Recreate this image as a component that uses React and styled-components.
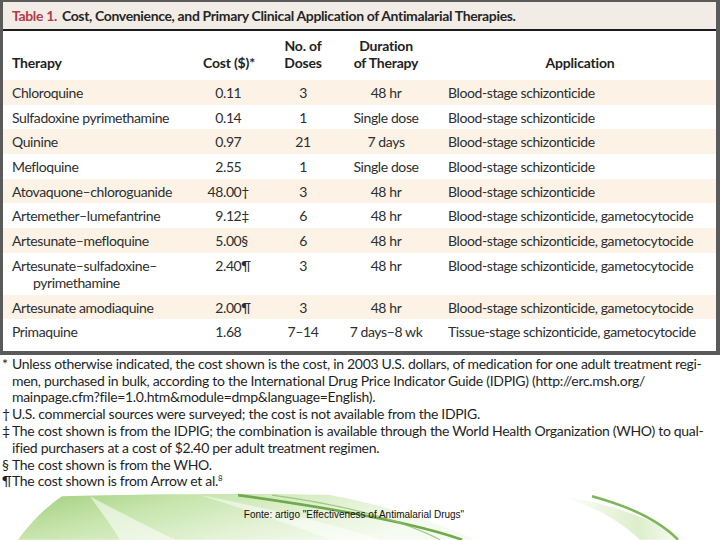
import styled, { createGlobalStyle } from "styled-components";

const GlobalStyle = createGlobalStyle`
  html, body {
    margin: 0;
    padding: 0;
    background: #fff;
  }
  body {
    font-family: Lato, "Open Sans", sans-serif;
    width: 720px;
    height: 540px;
    overflow: hidden;
  }
`;

const rows = [
    { therapy: ["Chloroquine"], cost: ["0", ".11", ""], doses: "3", duration: "48 hr", application: "Blood-stage schizonticide" },
    { therapy: ["Sulfadoxine pyrimethamine"], cost: ["0", ".14", ""], doses: "1", duration: "Single dose", application: "Blood-stage schizonticide" },
    { therapy: ["Quinine"], cost: ["0", ".97", ""], doses: "21", duration: "7 days", application: "Blood-stage schizonticide" },
    { therapy: ["Mefloquine"], cost: ["2", ".55", ""], doses: "1", duration: "Single dose", application: "Blood-stage schizonticide" },
    { therapy: ["Atovaquone–chloroguanide"], cost: ["48", ".00", "†"], doses: "3", duration: "48 hr", application: "Blood-stage schizonticide" },
    { therapy: ["Artemether–lumefantrine"], cost: ["9", ".12", "‡"], doses: "6", duration: "48 hr", application: "Blood-stage schizonticide, gametocytocide" },
    { therapy: ["Artesunate–mefloquine"], cost: ["5", ".00", "§"], doses: "6", duration: "48 hr", application: "Blood-stage schizonticide, gametocytocide" },
    { therapy: ["Artesunate–sulfadoxine–", "pyrimethamine"], cost: ["2", ".40", "¶"], doses: "3", duration: "48 hr", application: "Blood-stage schizonticide, gametocytocide" },
    { therapy: ["Artesunate amodiaquine"], cost: ["2", ".00", "¶"], doses: "3", duration: "48 hr", application: "Blood-stage schizonticide, gametocytocide" },
    { therapy: ["Primaquine"], cost: ["1", ".68", ""], doses: "7–14", duration: "7 days–8 wk", application: "Tissue-stage schizonticide, gametocytocide" },
];

const notes = [
    { mark: "*", lines: [
        "Unless otherwise indicated, the cost shown is the cost, in 2003 U.S. dollars, of medication for one adult treatment regi-",
        "men, purchased in bulk, according to the International Drug Price Indicator Guide (IDPIG) (http://erc.msh.org/",
        "mainpage.cfm?file=1.0.htm&module=dmp&language=English).",
    ] },
    { mark: "†", lines: ["U.S. commercial sources were surveyed; the cost is not available from the IDPIG."] },
    { mark: "‡", lines: [
        "The cost shown is from the IDPIG; the combination is available through the World Health Organization (WHO) to qual-",
        "ified purchasers at a cost of $2.40 per adult treatment regimen.",
    ] },
    { mark: "§", lines: ["The cost shown is from the WHO."] },
    { mark: "¶", lines: ["The cost shown is from Arrow et al.", "8"] },
];

const Page = styled.div`
    display: flex;
    flex-direction: column;
    width: 720px;
    height: 540px;
`;

const Frame = styled.section`
    border-style: solid;
    border-color: #5a5a5a;
    border-width: 2px 4px 4px 3px;
    background: #fff;
    padding-bottom: 7px;
    color: #2c2c2c;
`;

const TitleBar = styled.div`
    height: 27px;
    background: #f1ece5;
    border-bottom: 2px solid #1c1c1c;
    padding-left: 9px;
    display: flex;
    align-items: center;
    font-size: 14px;
    font-weight: 700;
    letter-spacing: -0.35px;
    color: #262626;
    white-space: nowrap;
`;

const TableNo = styled.span`
    color: #b53a4a;
    margin-right: 5px;
`;

const Grid = styled.div`
    display: grid;
    grid-template-columns: 197px 64px 78px 86px 1fr;
    font-size: 14px;
    line-height: 17px;
    letter-spacing: ${(p) => (p.$head ? "-0.2px" : "-0.4px")};
    background: ${(p) => (p.$shade ? "#fcf3e6" : "transparent")};
    padding: ${(p) => (p.$head ? "0 0 9px" : "4px 0 3.7px")};
    height: ${(p) => (p.$head ? "49px" : "auto")};
    box-sizing: border-box;
    align-items: ${(p) => (p.$head ? "end" : "start")};
    font-weight: ${(p) => (p.$head ? 700 : 400)};
    color: ${(p) => (p.$head ? "#222" : "#2e2e2e")};
`;

const Cell = styled.div`
    white-space: nowrap;
    text-align: ${(p) => p.$align || "left"};
    padding-left: ${(p) => p.$pl || 0}px;
    padding-right: ${(p) => p.$pr || 0}px;
`;

const Indent = styled.div`
    padding-left: 21px;
`;

const IntPart = styled.span`
    display: inline-block;
    width: 23px;
    text-align: right;
`;

const Notes = styled.div`
    padding: 1px 0 0 2px;
    font-size: 14px;
    line-height: 16.8px;
    letter-spacing: -0.3px;
    color: #1f1f1f;
`;

const Note = styled.div`
    display: grid;
    grid-template-columns: 10px 1fr;
    white-space: nowrap;
`;

const Sup = styled.sup`
    font-size: 8px;
    line-height: 0;
    vertical-align: 5px;
`;

const Footer = styled.footer`
    position: relative;
    flex: 1;
    margin-top: 2px;
`;

const Swoosh = styled.svg`
    position: absolute;
    inset: 0;
    width: 100%;
    height: 100%;
`;

const Caption = styled.div`
    position: relative;
    text-align: center;
    font-family: "Liberation Sans", Arial, sans-serif;
    font-size: 10px;
    color: #111;
    padding: 17px 12px 0 0;
`;

function Row({ row, shade }) {
    return (
        <Grid $shade={shade}>
            <Cell $pl={9}>
                {row.therapy[0]}
                {row.therapy[1] && <Indent>{row.therapy[1]}</Indent>}
            </Cell>
            <Cell>
                <IntPart>{row.cost[0]}</IntPart>
                {row.cost[1]}
                {row.cost[2]}
            </Cell>
            <Cell $align="center">{row.doses}</Cell>
            <Cell $align="center" $pl={2}>{row.duration}</Cell>
            <Cell $pl={20}>{row.application}</Cell>
        </Grid>
    );
}

export default function App() {
    return (
        <Page>
            <GlobalStyle />
            <Frame>
                <TitleBar>
                    <TableNo>Table 1.</TableNo>
                    Cost, Convenience, and Primary Clinical Application of Antimalarial Therapies.
                </TitleBar>
                <Grid $head>
                    <Cell $pl={9}>Therapy</Cell>
                    <Cell $pl={3}>Cost ($)*</Cell>
                    <Cell $align="center">No. of<br />Doses</Cell>
                    <Cell $align="center" $pl={2}>Duration<br />of Therapy</Cell>
                    <Cell $align="center" $pl={20} $pr={4}>Application</Cell>
                </Grid>
                {rows.map((row, idx) => (
                    <Row key={idx} row={row} shade={idx % 2 === 0} />
                ))}
            </Frame>
            <Notes>
                {notes.map((note) => (
                    <Note key={note.mark}>
                        <span>{note.mark}</span>
                        <div>
                            {note.mark === "¶" ? (
                                <div>
                                    {note.lines[0]}
                                    <Sup>{note.lines[1]}</Sup>
                                </div>
                            ) : (
                                note.lines.map((line, i) => <div key={i}>{line}</div>)
                            )}
                        </div>
                    </Note>
                ))}
            </Notes>
            <Footer>
                <Swoosh viewBox="0 0 720 46" preserveAspectRatio="none">
                    <defs>
                        <linearGradient id="band" x1="0" y1="0" x2="1" y2="0.4">
                            <stop offset="0" stopColor="#9fcf7c" />
                            <stop offset="0.35" stopColor="#c7e5ad" />
                            <stop offset="0.7" stopColor="#e4f2d6" />
                            <stop offset="1" stopColor="#f6fbf1" />
                        </linearGradient>
                        <linearGradient id="right" x1="0" y1="0" x2="1" y2="0">
                            <stop offset="0" stopColor="#ffffff" />
                            <stop offset="0.6" stopColor="#dceecb" />
                            <stop offset="1" stopColor="#ffffff" />
                        </linearGradient>
                    </defs>
                    <path d="M62 4 C150 2 260 1 330 3 C390 14 440 30 475 46 L18 46 C30 30 45 15 62 4 Z" fill="url(#band)" />
                    <path d="M90 4 C120 20 150 34 175 46 L120 46 C110 30 100 18 90 4 Z" fill="#ffffff" opacity="0.55" />
                    <path d="M200 3 C260 14 330 30 380 46 L330 46 C290 30 240 16 200 3 Z" fill="#ffffff" opacity="0.5" />
                    <path d="M238 3 C320 14 410 28 462 46" stroke="#6faa4c" strokeWidth="2.5" fill="none" />
                    <path d="M272 3 C340 12 400 26 440 46" stroke="#8cc06a" strokeWidth="1.2" fill="none" opacity="0.8" />
                    <path d="M560 4 C610 10 650 26 690 46 L640 46 C620 28 595 14 560 4 Z" fill="url(#right)" />
                    <path d="M592 4 C630 14 660 28 678 46" stroke="#7db55a" strokeWidth="2.5" fill="none" />
                </Swoosh>
                <Caption>Fonte: artigo "Effectiveness of Antimalarial Drugs"</Caption>
            </Footer>
        </Page>
    );
}
